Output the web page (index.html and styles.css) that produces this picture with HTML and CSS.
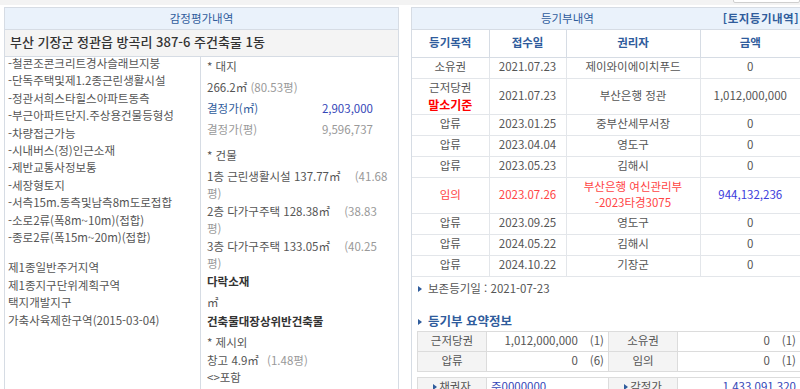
FILE: index.html
```html
<!DOCTYPE html>
<html lang="ko">
<head>
<meta charset="utf-8">
<title>감정평가내역 / 등기부내역</title>
<link rel="stylesheet" href="styles.css">
</head>
<body>
<div class="topstrip"><span class="tab"></span></div>
<div class="panels">
  <section class="panel left">
    <div class="phead">감정평가내역</div>
    <div class="ptitle">부산 기장군 정관읍 방곡리 387-6 주건축물 1동</div>
    <div class="pbody">
      <div class="desc">
        <p>-철콘조콘크리트경사슬래브지붕</p>
        <p>-단독주택및제1.2종근린생활시설</p>
        <p>-정관서희스타힐스아파트동측</p>
        <p>-부근아파트단지.주상용건물등형성</p>
        <p>-차량접근가능</p>
        <p>-시내버스(정)인근소재</p>
        <p>-제반교통사정보통</p>
        <p>-세장형토지</p>
        <p>-서측15m.동측및남측8m도로접합</p>
        <p>-소로2류(폭8m~10m)(접합)</p>
        <p>-종로2류(폭15m~20m)(접합)</p>
        <p class="zone">제1종일반주거지역</p>
        <p>제1종지구단위계획구역</p>
        <p>택지개발지구</p>
        <p>가축사육제한구역(2015-03-04)</p>
      </div>
      <div class="detail">
        <p>* 대지</p>
        <p>266.2㎡ <span class="sub">(80.53평)</span></p>
        <div class="price blue"><span>결정가(㎡)</span><span class="num">2,903,000</span></div>
        <div class="price light"><span>결정가(평)</span><span class="num">9,596,737</span></div>
        <p class="sect">* 건물</p>
        <p class="bld">1층 근린생활시설 137.77㎡ <span class="sub wide">(41.68<br>평)</span></p>
        <p class="bld">2층 다가구주택 128.38㎡ <span class="sub wide">(38.83<br>평)</span></p>
        <p class="bld last">3층 다가구주택 133.05㎡ <span class="sub wide">(40.25<br>평)</span></p>
        <p class="strong">다락소재</p>
        <p class="sq">㎡</p>
        <p class="strong">건축물대장상위반건축물</p>
        <p class="tight">* 제시외</p>
        <p class="tight0">창고 4.9㎡ <span class="sub mid">(1.48평)</span></p>
        <p>&lt;&gt;포함</p>
      </div>
    </div>
  </section>

  <section class="panel right">
    <div class="phead rhead"><span class="rtitle">등기부내역</span><span class="rlink">[토지등기내역]</span></div>
    <table class="reg">
      <colgroup><col class="c1"><col class="c2"><col class="c3"><col class="c4"></colgroup>
      <thead>
        <tr><th>등기목적</th><th>접수일</th><th>권리자</th><th>금액</th></tr>
      </thead>
      <tbody>
        <tr><td>소유권</td><td>2021.07.23</td><td>제이와이에이치푸드</td><td>0</td></tr>
        <tr class="two"><td class="stack"><span class="l1">근저당권</span><span class="base">말소기준</span></td><td>2021.07.23</td><td>부산은행 정관</td><td>1,012,000,000</td></tr>
        <tr><td>압류</td><td>2023.01.25</td><td>중부산세무서장</td><td>0</td></tr>
        <tr><td>압류</td><td>2023.04.04</td><td>영도구</td><td>0</td></tr>
        <tr><td>압류</td><td>2023.05.23</td><td>김해시</td><td>0</td></tr>
        <tr class="two red"><td>임의</td><td>2023.07.26</td><td>부산은행 여신관리부<br>-2023타경3075</td><td class="amt">944,132,236</td></tr>
        <tr><td>압류</td><td>2023.09.25</td><td>영도구</td><td>0</td></tr>
        <tr><td>압류</td><td>2024.05.22</td><td>김해시</td><td>0</td></tr>
        <tr><td>압류</td><td>2024.10.22</td><td>기장군</td><td>0</td></tr>
      </tbody>
    </table>
    <p class="note"><span class="tri"></span>보존등기일 : 2021-07-23</p>
    <h3 class="subtitle"><span class="tri"></span>등기부 요약정보</h3>
    <table class="sum">
      <colgroup><col class="s1"><col class="s2"><col class="s3"><col class="s4"></colgroup>
      <tr><th>근저당권</th><td>1,012,000,000<span class="cnt">(1)</span></td><th>소유권</th><td>0<span class="cnt">(1)</span></td></tr>
      <tr><th>압류</th><td>0<span class="cnt">(6)</span></td><th>임의</th><td>0<span class="cnt">(1)</span></td></tr>
    </table>
    <table class="sum sum2">
      <colgroup><col class="s1"><col class="s2"><col class="s3"><col class="s4"></colgroup>
      <tr><th><span class="tri"></span>채권자</th><td class="lft">주0000000</td><th><span class="tri"></span>감정가</th><td class="bl">1,433,091,320</td></tr>
    </table>
  </section>
</div>
</body>
</html>
```

FILE: styles.css
```css
* { box-sizing: border-box; }
html, body { margin: 0; padding: 0; }
body {
  background: #fff;
  font-family: "Noto Sans CJK KR", "Noto Sans", sans-serif;
  font-size: 11.5px;
  color: #555;
  width: 800px;
  height: 389px;
  overflow: hidden;
}
p { margin: 0; }

.topstrip {
  height: 5px;
  background: #f3f3f3;
  position: relative;
}
.topstrip .tab {
  position: absolute;
  right: 0;
  top: -4px;
  width: 67px;
  height: 7px;
  border: 1px solid #cfcfcf;
  border-radius: 2px;
  background: #fff;
}

.panels {
  display: flex;
  align-items: flex-start;
  padding: 2px 0 0 4px;
  gap: 12px;
}
.panel {
  border: 1px solid #d6dce4;
  flex: none;
}
.panel.left { width: 395px; }
.panel.right { width: 390px; border-right: none; }

.phead {
  height: 22px;
  background: #eaf2fb;
  color: #2f5c9c;
  text-align: center;
  line-height: 20px;
  font-size: 11.5px;
  border-bottom: 1px solid #d6dce4;
}
.ptitle {
  height: 27px;
  background: #f4f4f4;
  border-bottom: 1px solid #d6dce4;
  color: #333;
  font-size: 13px;
  font-weight: 500;
  line-height: 24px;
  padding-left: 5px;
}
.pbody { display: flex; }
.desc {
  width: 196px;
  border-right: 1px solid #d6dce4;
  padding: 0 0 20px 3px;
  line-height: 17.4px;
}
.desc p:first-child { margin-top: -2px; }
.desc .zone { margin-top: 13px; }
.detail {
  flex: 1;
  padding: 1px 0 0 6px;
  line-height: 17px;
}
.detail > p, .detail > .price { margin-bottom: 4px; }
.detail .sect { margin-top: 9px; }
.detail .bld { margin-bottom: 1px; }
.detail .bld.last { margin-bottom: 1px; }
.detail .sq { margin-bottom: 2px; }
.detail .tight { margin-bottom: 1px; }
.detail .tight0 { margin-bottom: 0; }
.sub { color: #999; }
.sub.wide { margin-left: 11px; }
.sub.mid { margin-left: 5px; }
.price { display: flex; width: 166px; justify-content: space-between; }
.price.blue { color: #3547b8; }
.price.blue span:first-child { color: #2f5c9c; }
.price.light { color: #999; }
.strong { font-weight: bold; color: #333; }

/* right */
.rhead { display: flex; padding: 0 2px 0 0; }
.rtitle { flex: 1; text-align: center; }
.rlink { font-weight: bold; letter-spacing: 0.5px; }

table { border-collapse: collapse; }
.reg { width: 388px; table-layout: fixed; }
.reg .c1 { width: 77px; }
.reg .c2 { width: 77px; }
.reg .c3 { width: 134px; }
.reg .c4 { width: 100px; }
.reg th {
  height: 27px;
  color: #2f5c9c;
  font-weight: bold;
  font-size: 11.5px;
  line-height: 14px;
  border-right: 1px solid #d6dce4;
  border-bottom: 1px solid #d6dce4;
  padding: 0 0 3px;
}
.reg td {
  height: 21px;
  text-align: center;
  line-height: 16px;
  padding: 0 0 3px;
  border-right: 1px solid #e3e6ea;
  border-bottom: 1px solid #e3e6ea;
}
.reg tr.two td { height: 35px; }
.reg tr.two td.stack { padding: 0; }
.reg th:last-child, .reg td:last-child { border-right: none; }
.l1 { display: block; height: 16px; line-height: 16px; }
.base {
  display: block;
  height: 19px;
  line-height: 19px;
  color: #f00;
  font-weight: bold;
  font-size: 12px;
}
.reg tr.red td { color: #f44; }
.reg tr.red td.amt { color: #3b3bdc; }

.tri {
  display: inline-block;
  width: 0; height: 0;
  border-top: 3px solid transparent;
  border-bottom: 3px solid transparent;
  border-left: 4px solid #2f5c9c;
  margin-right: 6px;
  vertical-align: 1px;
}
.note {
  padding: 3px 0 0 6px;
  line-height: 17px;
}
.subtitle {
  margin: 16px 0 3px;
  padding-left: 6px;
  font-size: 12.5px;
  font-weight: bold;
  color: #2f5c9c;
  line-height: 15px;
}
.sum {
  margin-left: 5px;
  width: 383px;
  table-layout: fixed;
}
.sum .s1 { width: 69px; }
.sum .s2 { width: 122px; }
.sum .s3 { width: 69px; }
.sum .s4 { width: 123px; }
.sum th, .sum td {
  border: 1px solid #dcdcdc;
  height: 20px;
  padding: 0 4px 2px;
  font-weight: normal;
  line-height: 16px;
}
.sum th { background: #f4f4f4; text-align: center; }
.sum td { text-align: right; }
.cnt { margin-left: 12px; }
.sum2 { margin-top: 5px; }
.sum2 td.lft { text-align: left; color: #3547b8; }
.sum2 td.bl { color: #3547b8; }
.sum2 th .tri { margin-right: 2px; }
```
